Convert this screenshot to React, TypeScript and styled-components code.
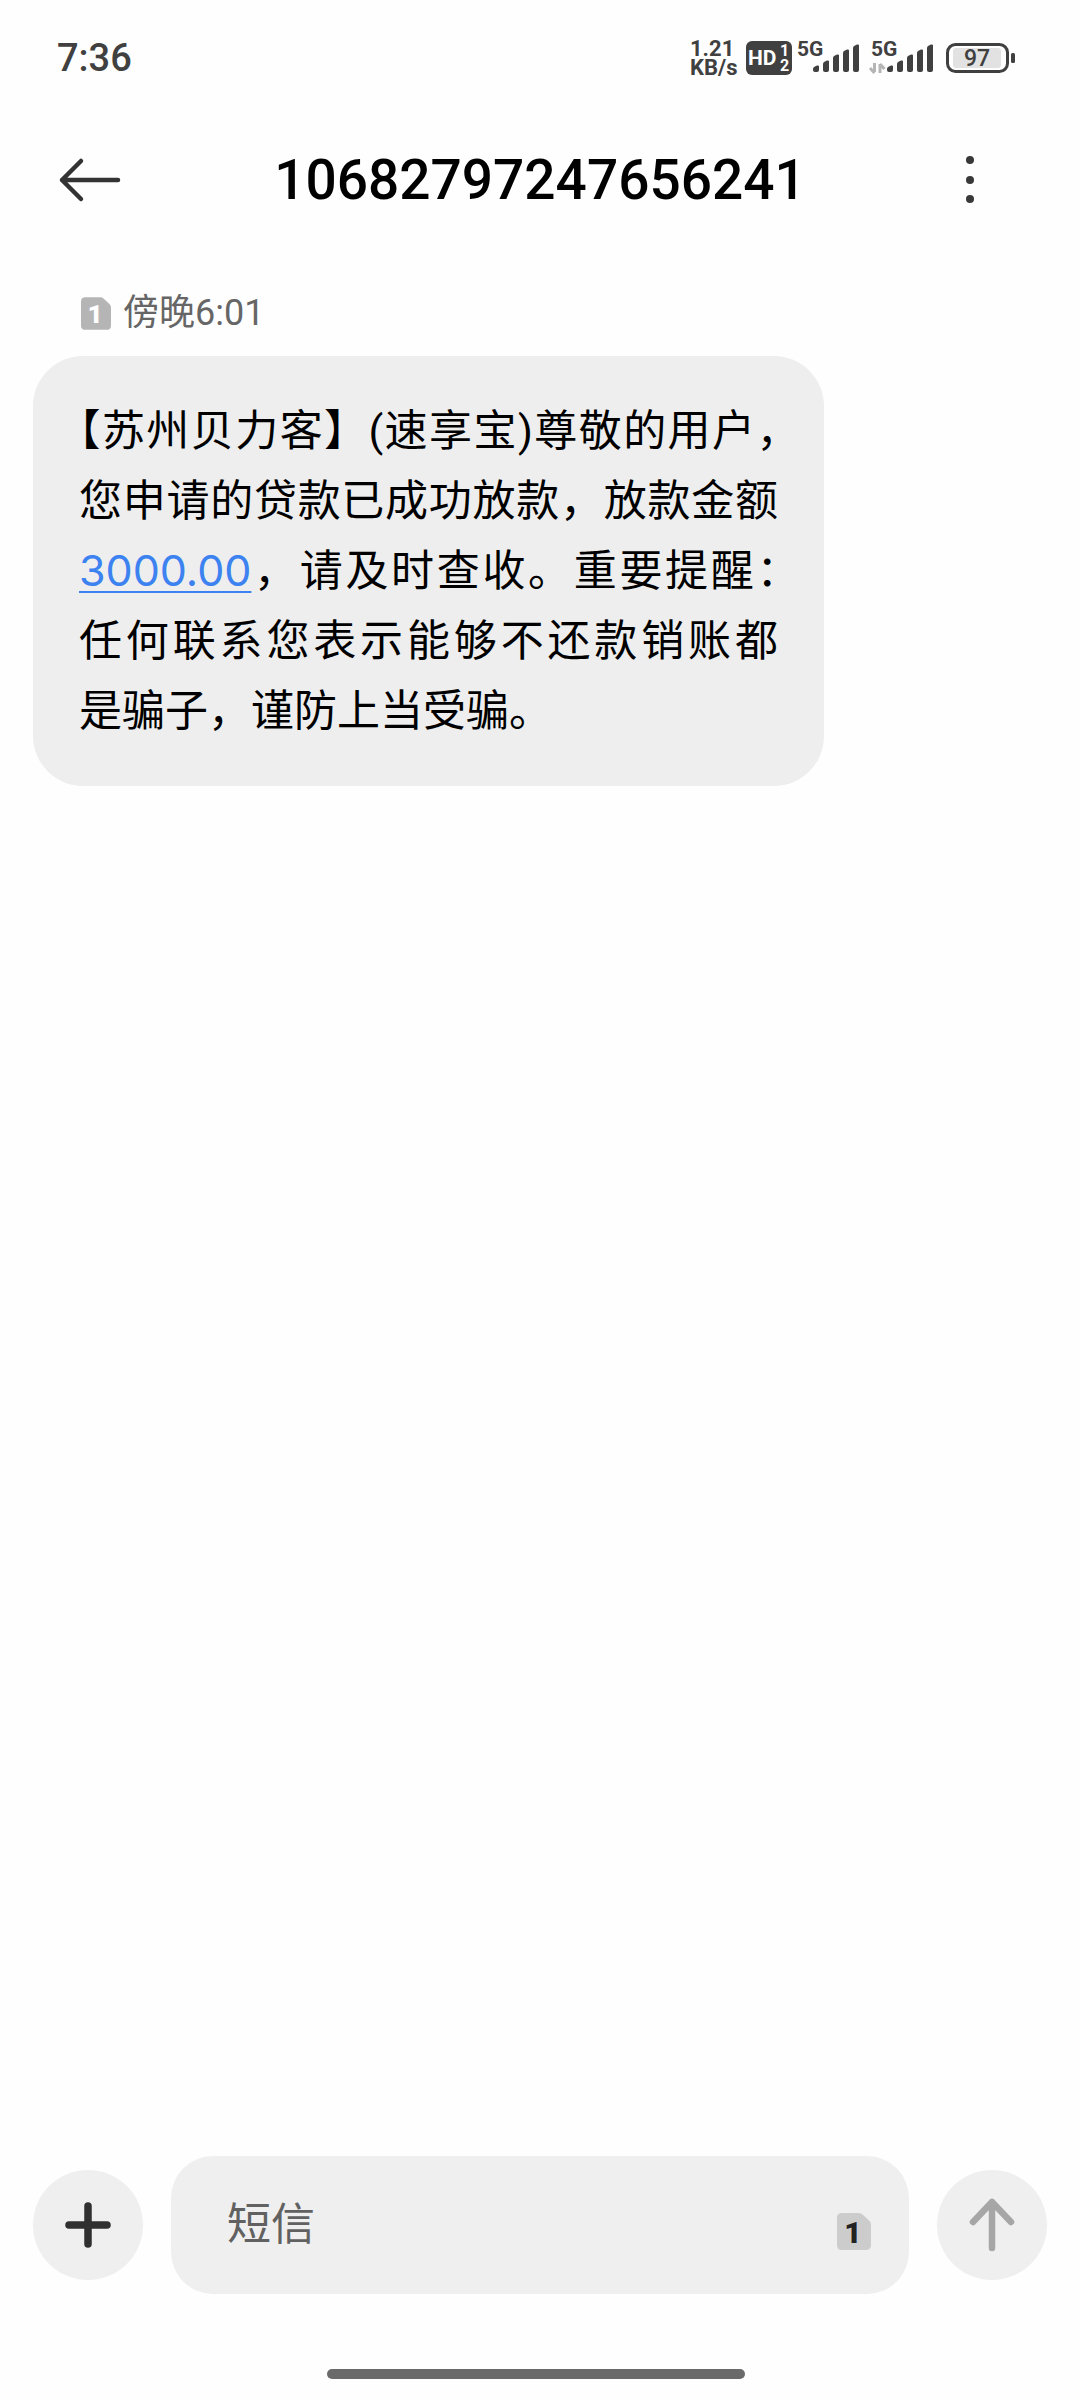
import React from "react";
import styled, { createGlobalStyle } from "styled-components";

const GlobalStyle = createGlobalStyle`
  *, *::before, *::after { box-sizing: border-box; }
  body {
    margin: 0;
    background: #fefefe;
    color: #000;
    font-family: Roboto, "Noto Sans CJK SC", sans-serif;
  }
  button, input { font: inherit; color: inherit; border: 0; padding: 0; margin: 0; background: none; }
  svg { display: block; flex: none; overflow: visible; }
`;

const Screen = styled.div`
  min-height: 100vh;
  display: flex;
  flex-direction: column;
`;

const StatusBar = styled.div`
  height: 116px;
  padding: 0 66px 0 57px;
  display: flex;
  align-items: center;
  justify-content: space-between;
  color: #404040;
`;

const Clock = styled.time`
  font-size: 38px;
  line-height: 40px;
  font-weight: 500;
`;

const StatusIcons = styled.div`
  display: flex;
  align-items: center;
`;

const NetSpeed = styled.div`
  width: 56px;
  font-size: 22px;
  line-height: 19px;
  font-weight: 700;
`;

const IconSlot = styled.span<{ $gap: number }>`
  margin-right: ${(p) => p.$gap}px;
`;

const Header = styled.header`
  height: 128px;
  padding: 0 54px;
  display: grid;
  grid-template-columns: 72px 1fr 92px;
  align-items: center;
`;

const IconButton = styled.button`
  width: 72px;
  height: 72px;
  display: flex;
  align-items: center;
  justify-content: center;
  cursor: pointer;
`;

const Title = styled.h1`
  margin: 0;
  padding-left: 20px;
  font-size: 55px;
  line-height: 72px;
  font-weight: 500;
  text-align: center;
`;

const Thread = styled.main`
  flex: 1;
  padding: 44px 33px 0;
`;

const Meta = styled.div`
  display: flex;
  align-items: center;
  gap: 12px;
  height: 50px;
  margin-bottom: 18px;
  padding-left: 48px;
  color: #666;
  font-size: 36px;
  line-height: 50px;
`;

const Bubble = styled.p`
  max-width: 78%;
  margin: 0;
  padding: 40px 46px;
  border-radius: 50px;
  background: #eee;
  font-size: 43px;
  line-height: 70px;
  text-align: justify;
  text-spacing-trim: space-all;
`;

const HalfWidth = styled.span`
  font-family: "Noto Sans CJK SC", sans-serif;
  font-feature-settings: "halt";
  line-height: 1;
`;

const Phrase = styled.span`
  white-space: nowrap;
`;

const Amount = styled.a`
  color: #3c82f0;
  font-family: Inter, sans-serif;
  line-height: 1;
  text-decoration: underline;
  text-decoration-thickness: 2px;
  text-underline-offset: 5px;
`;

const Composer = styled.form`
  display: flex;
  align-items: center;
  gap: 28px;
  padding: 0 33px;
`;

const RoundButton = styled.button`
  flex: none;
  width: 110px;
  height: 110px;
  border-radius: 50%;
  background: #efefef;
  display: flex;
  align-items: center;
  justify-content: center;
  cursor: pointer;
`;

const Field = styled.label`
  flex: 1;
  min-width: 0;
  height: 138px;
  padding: 0 38px 0 56px;
  border-radius: 42px;
  background: #efefef;
  display: flex;
  align-items: center;
  gap: 20px;
`;

const TextInput = styled.input`
  flex: 1;
  min-width: 0;
  height: 64px;
  font-size: 44px;
  outline: none;
  &::placeholder { color: #616161; opacity: 1; }
`;

const SimSlot = styled.span`
  padding-top: 13px;
`;

const NavBar = styled.div`
  display: flex;
  justify-content: center;
  padding: 75px 8px 21px 0;
`;

const HomeIndicator = styled.div`
  width: 418px;
  height: 10px;
  border-radius: 5px;
  background: #6a6a6a;
`;

function HdBadge() {
  return (
    <svg width="46" height="34" viewBox="0 0 46 34" role="img" aria-label="HD">
      <rect width="46" height="34" rx="6" fill="#404040" />
      <g fill="#fefefe" fontWeight="700">
        <text x="2" y="24" fontSize="21">HD</text>
        <text x="34" y="15" fontSize="16">1</text>
        <text x="34" y="30" fontSize="16">2</text>
      </g>
    </svg>
  );
}

const bars = [7, 12, 18, 23, 28];

function Signal({ traffic = false }: { traffic?: boolean }) {
  return (
    <svg width="64" height="34" viewBox="0 0 64 34" role="img" aria-label="5G">
      <text x="1" y="15" fontSize="21" fontWeight="700" fill="#404040">5G</text>
      {bars.map((h, i) => (
        <path
          key={h}
          d={`M${17 + i * 10} ${35 - h}q0-1 1-2l3-1.500q2-.5 2 1V29q0 2-2 2h-2q-2 0-2-2z`}
          fill="#404040"
        />
      ))}
      {traffic && (
        <path
          d="M4.500 22v9M0 27l4.500 5M10 32v-9M10 23l4.500 5"
          fill="none"
          stroke="#b5b5b5"
          strokeWidth="3"
        />
      )}
    </svg>
  );
}

function Battery() {
  return (
    <svg width="68" height="30" viewBox="0 0 68 30" role="img" aria-label="97%">
      <rect x="1.500" y="1.500" width="60" height="27" rx="8" fill="none" stroke="#404040" strokeWidth="3" />
      <rect x="7" y="5" width="48" height="20" rx="3" fill="#e2e2e2" />
      <rect x="65" y="10" width="4" height="10" rx="1.500" fill="#404040" />
      <text x="31" y="23" fontSize="23" fontWeight="500" fill="#404040" textAnchor="middle">97</text>
    </svg>
  );
}

function SimCard({ width, height, fill, ink }: { width: number; height: number; fill: string; ink: string }) {
  return (
    <svg width={width} height={height} viewBox="0 0 34 37" role="img" aria-label="SIM 1">
      <path d="M5 0H22Q24 0 25.500 1.500L32.500 8Q34 9.500 34 12V32Q34 37 29 37H5Q0 37 0 32V5Q0 0 5 0Z" fill={fill} />
      <text x="16" y="29.500" fontSize="30" fontWeight="900" fill={ink} textAnchor="middle">1</text>
    </svg>
  );
}

export default function App() {
  return (
    <>
      <GlobalStyle />
      <Screen>
        <StatusBar>
          <Clock>7:36</Clock>
          <StatusIcons>
            <NetSpeed>
              1.21
              <br />
              KB/s
            </NetSpeed>
            <IconSlot $gap={4}><HdBadge /></IconSlot>
            <IconSlot $gap={10}><Signal /></IconSlot>
            <IconSlot $gap={12}><Signal traffic /></IconSlot>
            <Battery />
          </StatusIcons>
        </StatusBar>

        <Header>
          <IconButton type="button" aria-label="返回">
            <svg width="62" height="44" viewBox="0 0 62 44" fill="none" stroke="#333" strokeWidth="4.500" strokeLinecap="round" strokeLinejoin="round">
              <path d="M59 22H3M22 3L3 22L22 41" />
            </svg>
          </IconButton>
          <Title>10682797247656241</Title>
          <IconButton type="button" aria-label="更多">
            <svg width="10" height="48" viewBox="0 0 10 48" fill="#383838">
              <circle cx="5" cy="4" r="4" />
              <circle cx="5" cy="24" r="4" />
              <circle cx="5" cy="43" r="4" />
            </svg>
          </IconButton>
        </Header>

        <Thread>
          <Meta>
            <SimCard width={30} height={33} fill="#b5b5b5" ink="#fefefe" />
            <time>傍晚6:01</time>
          </Meta>
          <Bubble lang="zh-CN">
            <HalfWidth>【</HalfWidth>苏州贝力客】(速享宝)尊敬的用户<HalfWidth>，</HalfWidth>您申请的贷款已成功放款，放款金额<Amount href="#amount">3000.00</Amount>，请及时查收。重要提醒<HalfWidth>：</HalfWidth>任何联系您表示能够不还款销账都<Phrase>是骗子</Phrase>，谨防上当受骗。
          </Bubble>
        </Thread>

        <Composer onSubmit={(e: React.FormEvent) => e.preventDefault()}>
          <RoundButton type="button" aria-label="添加">
            <svg width="46" height="46" viewBox="0 0 46 46" fill="none" stroke="#303030" strokeWidth="7.500" strokeLinecap="round">
              <path d="M23 4V42M4 23H42" />
            </svg>
          </RoundButton>
          <Field>
            <TextInput type="text" aria-label="短信" placeholder="短信" />
            <SimSlot>
              <SimCard width={34} height={37} fill="#ccc" ink="#222" />
            </SimSlot>
          </Field>
          <RoundButton type="submit" aria-label="发送">
            <svg width="46" height="54" viewBox="0 0 46 54" fill="none" stroke="#a6a6a6" strokeWidth="6.500" strokeLinecap="round" strokeLinejoin="round">
              <path d="M23 50V4M4 24L23 4L42 24" />
            </svg>
          </RoundButton>
        </Composer>
        <NavBar>
          <HomeIndicator />
        </NavBar>
      </Screen>
    </>
  );
}
